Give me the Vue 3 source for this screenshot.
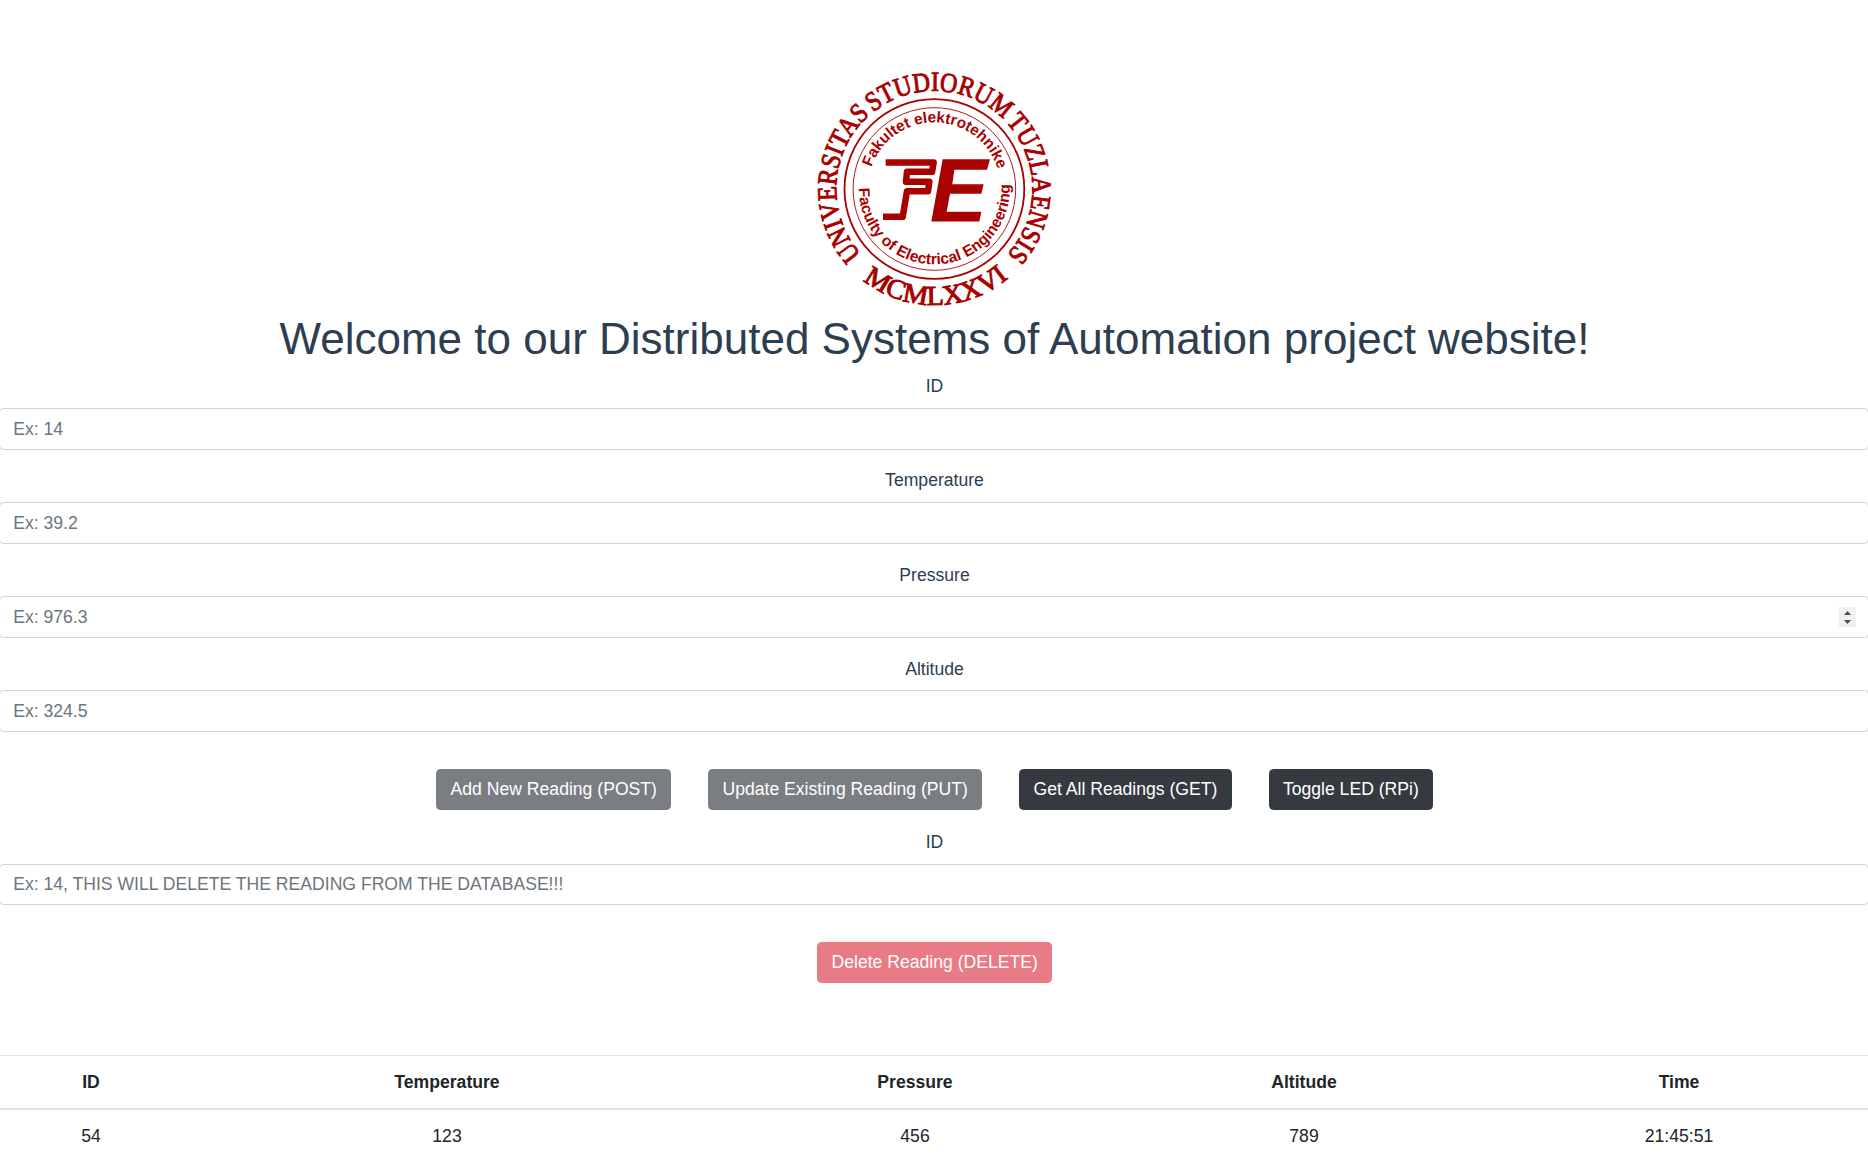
<script setup>
const fields = [
  { label: 'ID', hint: 'Ex: 14' },
  { label: 'Temperature', hint: 'Ex: 39.2' },
  { label: 'Pressure', hint: 'Ex: 976.3', spinner: true },
  { label: 'Altitude', hint: 'Ex: 324.5' }
]

const actions = [
  { text: 'Add New Reading (POST)', disabled: true },
  { text: 'Update Existing Reading (PUT)', disabled: true },
  { text: 'Get All Readings (GET)', disabled: false },
  { text: 'Toggle LED (RPi)', disabled: false }
]

const columns = ['ID', 'Temperature', 'Pressure', 'Altitude', 'Time']
const readings = [['54', '123', '456', '789', '21:45:51']]

// Arc around the emblem's centre; angles are degrees clockwise from the top.
function arc(r, from, to) {
  const point = (a) => {
    const t = (a * Math.PI) / 180
    return `${(135.3 + r * Math.sin(t)).toFixed(2)} ${(122.9 - r * Math.cos(t)).toFixed(2)}`
  }
  const large = Math.abs(to - from) > 180 ? 1 : 0
  const sweep = to > from ? 1 : 0
  return `M${point(from)} A${r} ${r} 0 ${large} ${sweep} ${point(to)}`
}

function ring(id, text, kind, r, from, to) {
  const length = (Math.abs(to - from) * Math.PI * r) / 180
  return { id, text, kind, d: arc(r, from, to), length: (length - 0.5).toFixed(1) }
}

const rings = [
  ring('ring-university', 'UNIVERSITAS STUDIORUM TUZLAENSIS', 'serif', 98, -132, 132),
  ring('ring-year', 'MCMLXXVI', 'serif', 116, 218, 140),
  ring('ring-bosnian', 'Fakultet elektrotehnike', 'sans', 66.5, -71, 73),
  ring('ring-english', 'Faculty of Electrical Engineering', 'sans', 75.5, 270.5, 86.5)
]
</script>

<template>
  <div class="page">
    <svg class="logo" viewBox="0 0 270 246.4">
      <defs>
        <path v-for="r in rings" :id="r.id" :key="r.id" :d="r.d" />
      </defs>
      <g fill="none" stroke="#a90000">
        <circle cx="135.4" cy="123" r="89.9" stroke-width="1.8" />
        <circle cx="135.4" cy="123" r="81.3" stroke-width="0.9" />
      </g>
      <text v-for="r in rings" :key="r.id" :class="r.kind" :textLength="r.length" lengthAdjust="spacingAndGlyphs">
        <textPath :href="'#' + r.id">{{ r.text }}</textPath>
      </text>
      <g transform="translate(61 74.2) scale(0.33333)" fill="#a90000">
        <path d="M248 57H390L381 89H283L277 132H371L364 161H270L260 215H364L358 244H214Z" />
        <path
          d="M77 67H221L216 95H141L138 125H208L204 153H141L128 230H69"
          fill="none" stroke="#a90000" stroke-width="19.5" stroke-linejoin="round"
        />
      </g>
    </svg>

    <h1>Welcome to our Distributed Systems of Automation project website!</h1>

    <form @submit.prevent>
      <div v-for="f in fields" :key="f.label" class="group">
        <label>{{ f.label }}</label>
        <div class="field">
          <input type="text" :placeholder="f.hint" />
          <svg v-if="f.spinner" class="spinner" viewBox="0 0 17 20">
            <rect width="17" height="20" fill="#f0f0f0" />
            <path d="M5 8L8.5 4L12 8ZM5 13L8.5 17L12 13Z" fill="#4d4d4d" />
          </svg>
        </div>
      </div>
      <div class="actions">
        <button v-for="a in actions" :key="a.text" type="button" class="btn dark" :disabled="a.disabled">{{ a.text }}</button>
      </div>
    </form>

    <form @submit.prevent>
      <div class="group">
        <label>ID</label>
        <div class="field">
          <input type="text" placeholder="Ex: 14, THIS WILL DELETE THE READING FROM THE DATABASE!!!" />
        </div>
      </div>
      <div class="actions">
        <button type="button" class="btn danger" disabled>Delete Reading (DELETE)</button>
      </div>
    </form>

    <table>
      <colgroup>
        <col class="c-id" />
        <col class="c-temp" />
        <col class="c-press" />
        <col class="c-alt" />
        <col class="c-time" />
      </colgroup>
      <thead>
        <tr>
          <th v-for="c in columns" :key="c">{{ c }}</th>
        </tr>
      </thead>
      <tbody>
        <tr v-for="row in readings" :key="row[0]">
          <td v-for="(cell, i) in row" :key="i">{{ cell }}</td>
        </tr>
      </tbody>
    </table>
  </div>
</template>

<style>
html {
  font-size: 17.6px;
}
body {
  margin: 0;
  background: #fff;
}
</style>

<style scoped>
* {
  box-sizing: border-box;
}
.page {
  height: 1157px;
  padding-top: 66px;
  overflow: hidden;
  font-family: 'Liberation Sans', Arial, sans-serif;
  font-size: 1rem;
  line-height: 1.5;
  color: #2c3e50;
  text-align: center;
}
.logo {
  display: block;
  width: 270px;
  height: 246.4px;
  margin: 0 auto;
  overflow: visible;
}
.logo text {
  fill: #a90000;
}
.serif {
  font-family: 'Liberation Serif', 'Times New Roman', serif;
  font-size: 27.5px;
  word-spacing: -2.5px;
  stroke: #a90000;
  stroke-width: 1px;
}
.sans {
  font-family: 'Liberation Sans', Arial, sans-serif;
  font-size: 15.5px;
  font-weight: 700;
}
h1 {
  margin: 0 0 7.1px;
  padding: 0.8px 0 0 1px;
  font-size: 2.5rem;
  font-weight: 500;
  line-height: 1.2;
}
.group {
  margin-bottom: 1rem;
}
label {
  display: block;
  margin-bottom: 8.38px;
  padding: 0.2px 0 0 1px;
}
.field {
  position: relative;
  margin: 0 -1px;
}
input {
  display: block;
  width: 100%;
  height: calc(1.5em + 0.75rem + 2px);
  padding: 6.8px 0.75rem 6.4px;
  border: 1px solid #ced4da;
  border-radius: 0.25rem;
  background: #fff;
  color: #495057;
  font: inherit;
}
input::placeholder {
  color: #6c757d;
  opacity: 1;
}
.spinner {
  position: absolute;
  top: 11px;
  right: 13px;
  width: 17px;
  height: 20px;
}
.actions {
  display: flex;
  justify-content: center;
  gap: 37.2px;
  padding: 18.9px 0 18.5px 1.4px;
}
.btn {
  padding: 0.375rem 0.75rem;
  border: 1px solid;
  border-radius: 0.25rem;
  color: #fff;
  font: inherit;
}
.btn:disabled {
  opacity: 0.65;
}
.dark {
  background: #343a40;
  border-color: #343a40;
}
.danger {
  background: #dc3545;
  border-color: #dc3545;
}
table {
  width: 100%;
  margin-top: 53px;
  border-collapse: collapse;
  table-layout: fixed;
  color: #212529;
}
.c-id { width: 182px; }
.c-temp { width: 530px; }
.c-press { width: 406px; }
.c-alt { width: 372px; }
.c-time { width: 378px; }
th,
td {
  padding: 0.75rem;
  border-top: 1px solid #dee2e6;
}
th {
  padding-bottom: 12.4px;
  border-bottom: 2px solid #dee2e6;
  font-weight: 700;
}
td {
  padding-top: 13px;
}
</style>
